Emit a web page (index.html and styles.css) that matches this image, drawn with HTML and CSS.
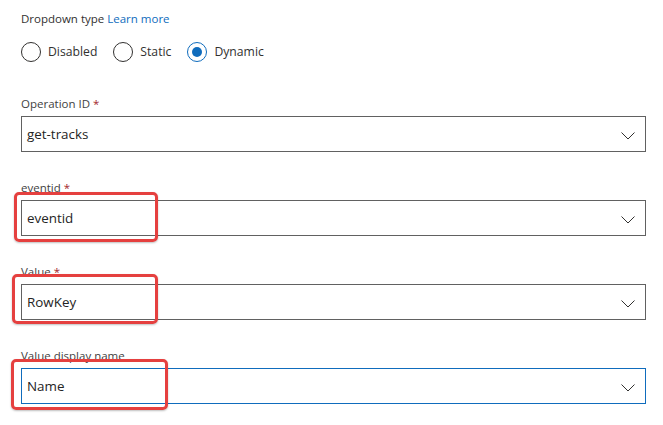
FILE: index.html
```html
<!DOCTYPE html>
<html>
<head>
<meta charset="utf-8">
<link rel="stylesheet" href="styles.css">
</head>
<body>
<div class="panel">
  <div class="type-label">Dropdown type <a class="link" href="#">Learn more</a></div>
  <div class="radios">
    <div class="radio"><span class="circle"></span><span class="rtext">Disabled</span></div>
    <div class="radio"><span class="circle"></span><span class="rtext">Static</span></div>
    <div class="radio"><span class="circle checked"></span><span class="rtext">Dynamic</span></div>
  </div>

  <div class="field first">
    <div class="label">Operation ID <span class="req">*</span></div>
    <div class="box">
      <span class="value">get-tracks</span>
      <svg class="chev" width="14" height="8" viewBox="0 0 14 8"><path d="M0.5 0.5 L7 7 L13.5 0.5" fill="none" stroke="#323130" stroke-width="1"/></svg>
    </div>
  </div>

  <div class="field">
    <div class="label">eventid <span class="req">*</span></div>
    <div class="box">
      <span class="value">eventid</span>
      <svg class="chev" width="14" height="8" viewBox="0 0 14 8"><path d="M0.5 0.5 L7 7 L13.5 0.5" fill="none" stroke="#323130" stroke-width="1"/></svg>
      <span class="mark mark-a"></span>
    </div>
  </div>

  <div class="field">
    <div class="label">Value <span class="req">*</span></div>
    <div class="box">
      <span class="value">RowKey</span>
      <svg class="chev" width="14" height="8" viewBox="0 0 14 8"><path d="M0.5 0.5 L7 7 L13.5 0.5" fill="none" stroke="#323130" stroke-width="1"/></svg>
      <span class="mark mark-b"></span>
    </div>
  </div>

  <div class="field">
    <div class="label">Value display name</div>
    <div class="box focus">
      <span class="value">Name</span>
      <svg class="chev" width="14" height="8" viewBox="0 0 14 8"><path d="M0.5 0.5 L7 7 L13.5 0.5" fill="none" stroke="#323130" stroke-width="1"/></svg>
      <span class="mark mark-c"></span>
    </div>
  </div>
</div>
</body>
</html>
```

FILE: styles.css
```css
html, body {
  margin: 0;
  padding: 0;
  background: #ffffff;
}
body {
  font-family: "Segoe UI", "Open Sans", "Noto Sans", sans-serif;
  color: #323130;
}
.panel {
  padding: 11px 17px 22px 21px;
}
.type-label {
  font-size: 11.5px;
  line-height: 16px;
  color: #323130;
}
.link {
  color: #0f6cbd;
  text-decoration: none;
}
.radios {
  display: flex;
  align-items: center;
  margin-top: 15px;
  height: 20px;
}
.radio {
  display: flex;
  align-items: center;
  margin-right: 16px;
}
.circle {
  box-sizing: border-box;
  width: 20px;
  height: 20px;
  border: 1px solid #323130;
  border-radius: 50%;
  position: relative;
}
.circle.checked {
  border-color: #0f6cbd;
}
.circle.checked::after {
  content: "";
  position: absolute;
  left: 4px;
  top: 4px;
  width: 10px;
  height: 10px;
  border-radius: 50%;
  background: #0f6cbd;
}
.rtext {
  font-size: 12.2px;
  line-height: 20px;
  margin-left: 7px;
  color: #323130;
}
.field {
  margin-top: 28px;
}
.field.first {
  margin-top: 34px;
}
.label {
  font-size: 11.5px;
  line-height: 16px;
  color: #424242;
  margin-bottom: 4px;
}
.req {
  color: #a4262c;
}
.box {
  position: relative;
  box-sizing: border-box;
  height: 36px;
  border: 1px solid #616161;
  display: flex;
  align-items: center;
  padding: 0 10px 0 5px;
  justify-content: space-between;
}
.box.focus {
  border-color: #0f6cbd;
}
.value {
  font-size: 13.4px;
  color: #242424;
}
.chev {
  display: block;
  margin-top: 3px;
}
.mark {
  position: absolute;
  box-sizing: border-box;
  border: 3.5px solid #e5403f;
  border-radius: 5px;
  box-shadow: 0 1px 2px rgba(0,0,0,0.25);
}
.mark-a {
  left: -8px;
  top: -9px;
  width: 144px;
  height: 50px;
}
.mark-b {
  left: -10px;
  top: -11px;
  width: 146px;
  height: 50px;
}
.mark-c {
  left: -11px;
  top: -10px;
  width: 157px;
  height: 51px;
}
```
